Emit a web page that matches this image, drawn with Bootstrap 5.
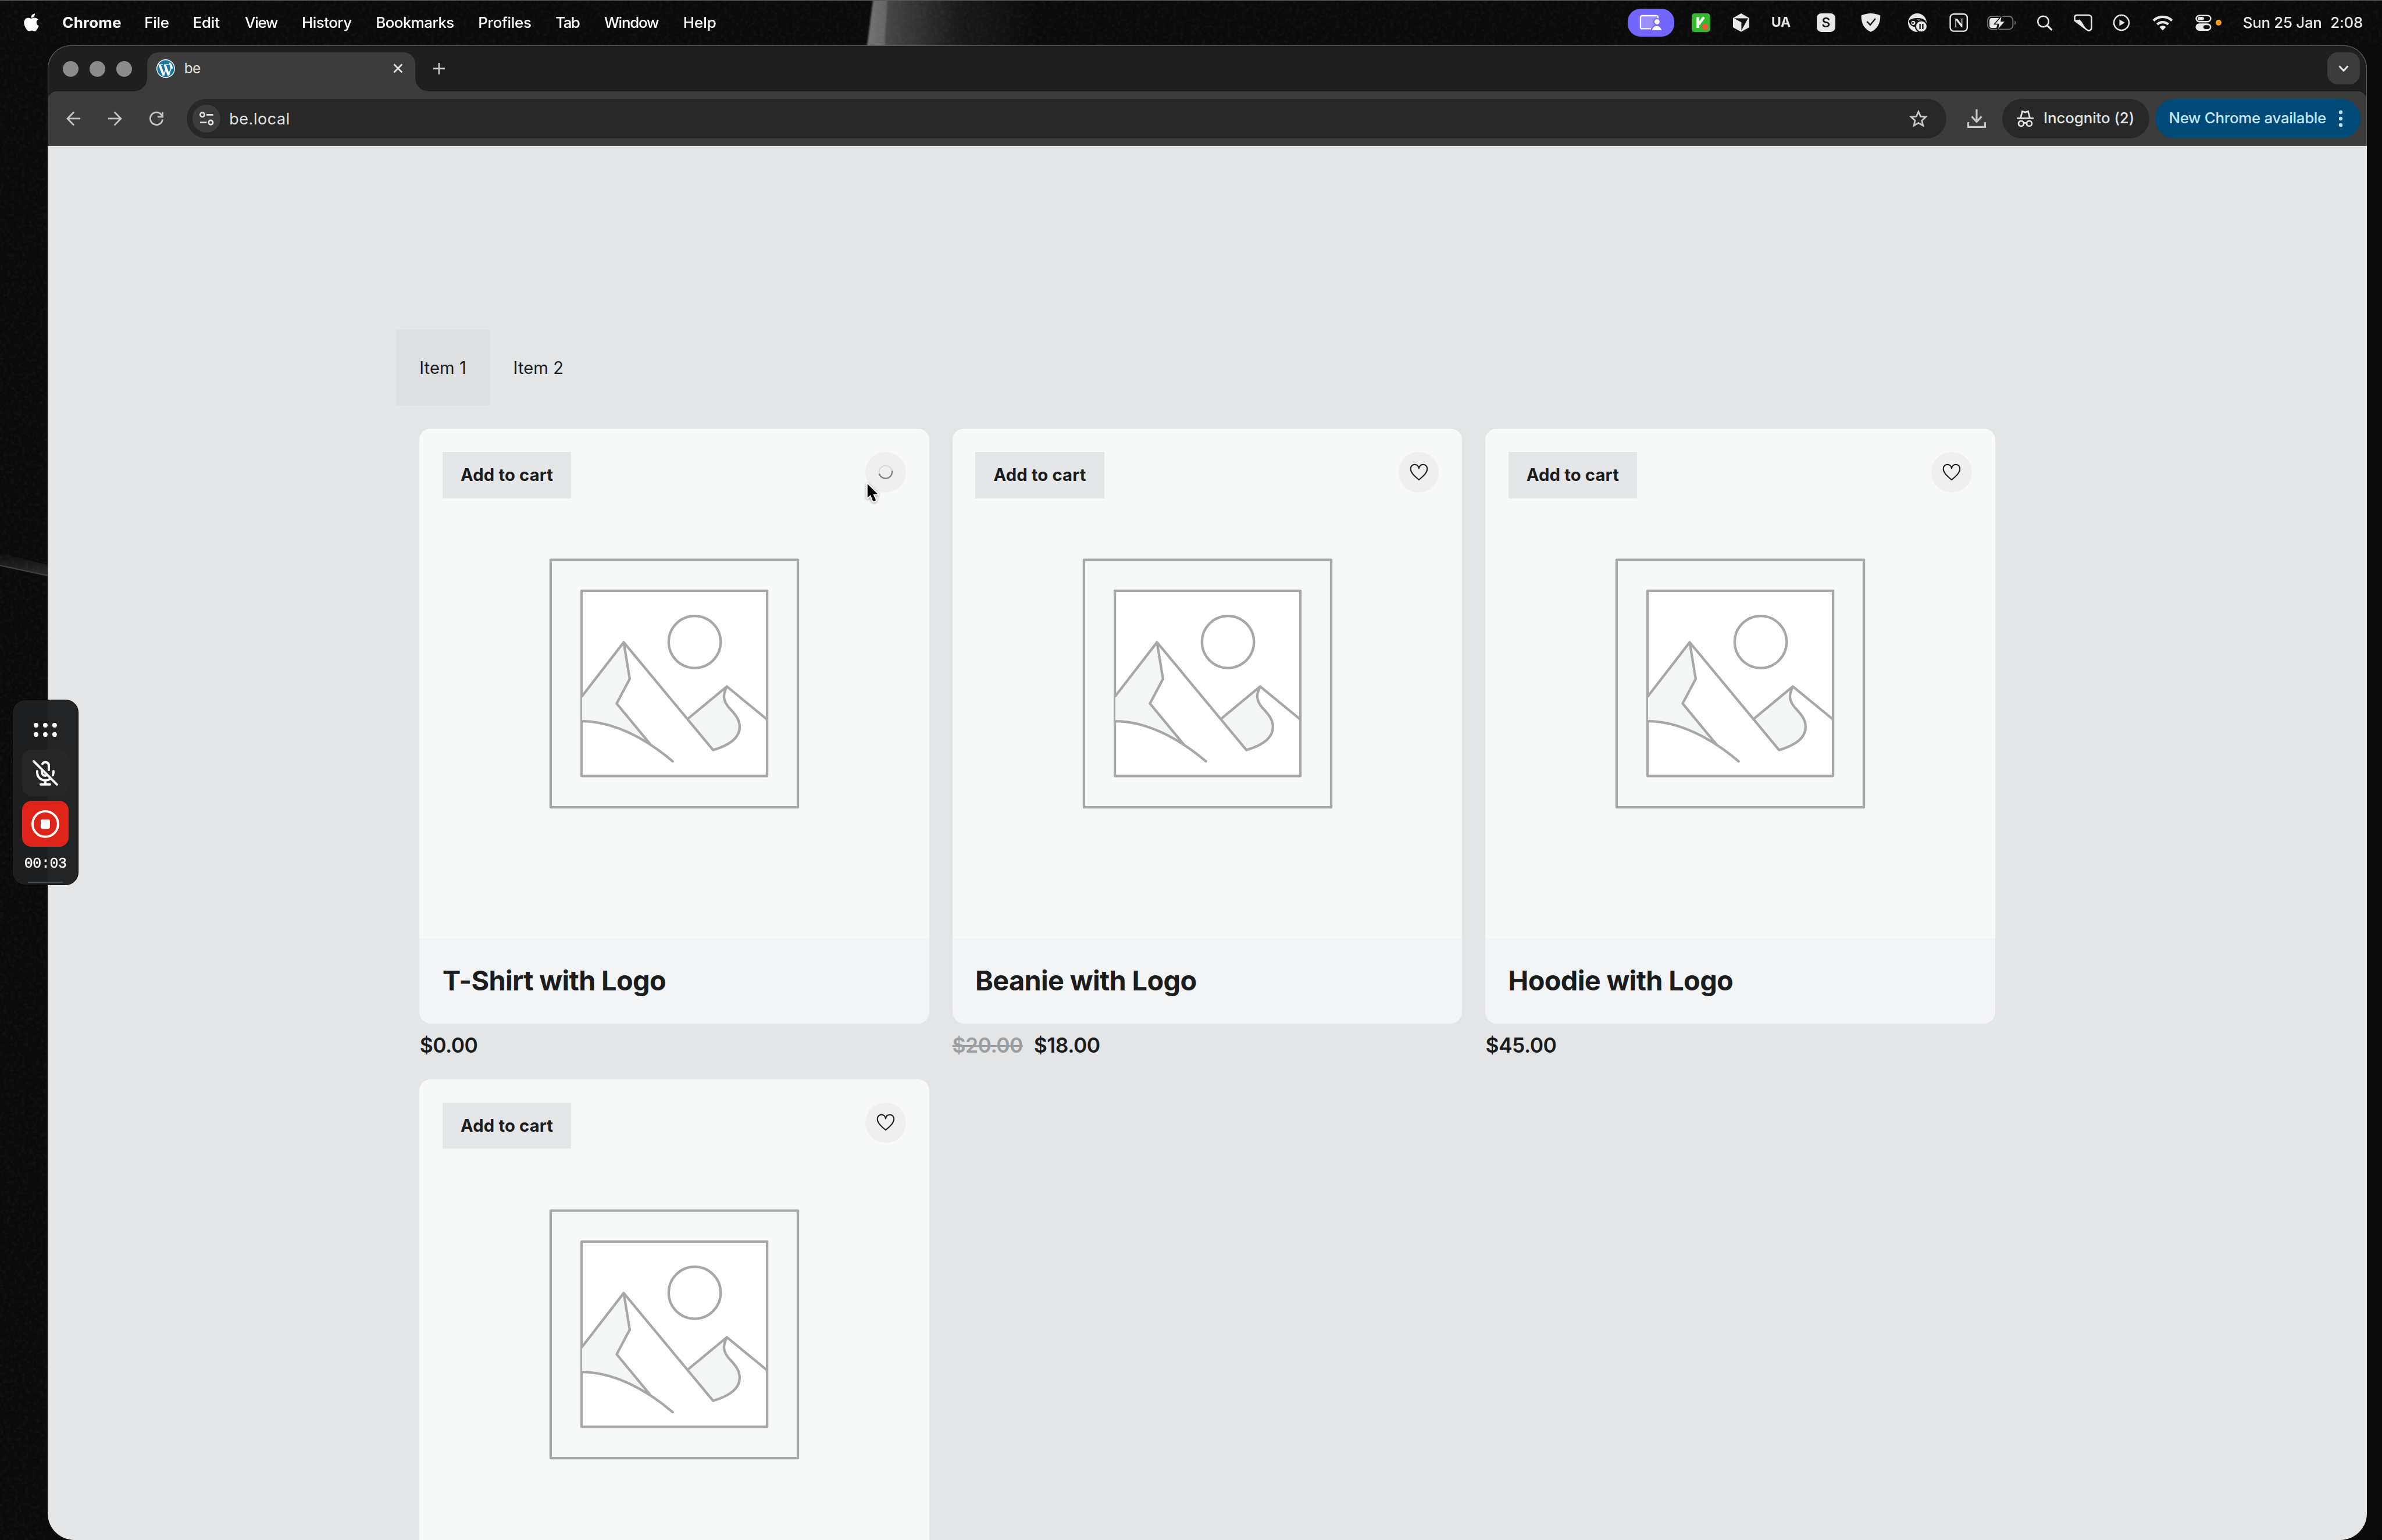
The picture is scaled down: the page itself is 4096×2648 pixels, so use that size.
<!DOCTYPE html>
<html lang="en">
<head>
<meta charset="utf-8">
<title>be</title>
<link rel="stylesheet" href="https://cdn.jsdelivr.net/npm/bootstrap@5.3.0/dist/css/bootstrap.min.css">
<style>
html,body{margin:0;background:#0b0b0b;overflow:hidden}
body{font-family:Inter,"Noto Sans",sans-serif;color:#1b1c1d;width:4096px;height:2648px}
svg{display:block;flex:none;overflow:visible}
.desk{zoom:.9961089;width:4112px;height:2658px;overflow:hidden;background:#0b0b0b}
.wallpaper{position:absolute;left:0;top:0}
.menubar{height:78px;padding:0 0 0 41px;font-size:26px;font-weight:500;line-height:32px;color:#fff;white-space:nowrap}
.apple{width:66.7px}
.apps span{flex:none}
.apps span:nth-child(1){width:141.5px;font-weight:700;letter-spacing:.25px}
.apps span:nth-child(2){width:83.8px;letter-spacing:-.27px}
.apps span:nth-child(3){width:89.8px;letter-spacing:-.2px}
.apps span:nth-child(4){width:98.2px;letter-spacing:-1.28px}
.apps span:nth-child(5){width:127.8px;letter-spacing:-.5px}
.apps span:nth-child(6){width:176.6px;letter-spacing:-.52px}
.apps span:nth-child(7){width:133.6px;letter-spacing:-.3px}
.apps span:nth-child(8){width:84px;letter-spacing:-1.57px}
.apps span:nth-child(9){width:136.4px;letter-spacing:-1.22px}
.tray{width:1302px;color:#e8e8e8}
.tray>:nth-child(2){margin-left:30px}
.tray>:nth-child(3){margin-left:39px}
.tray>:nth-child(5){margin-left:42px}
.tray>:nth-child(6){margin-left:45px}
.tray>:nth-child(7){margin-left:46px}
.tray>:nth-child(8){margin-left:38.5px}
.tray>:nth-child(9){margin-left:32px}
.tray>:nth-child(10){margin-left:34px}
.tray>:nth-child(11){margin-left:36px}
.tray>:nth-child(12){margin-left:35px}
.tray>:nth-child(13){margin-left:39px}
.tray>:nth-child(14){margin-left:38px}
.tray>:nth-child(15){margin-left:7px}
.share{width:80px;height:48px;border-radius:22px;background:#7266ff}
.ua{width:36px;margin:0 0 0 37px;font-size:23px;font-weight:700;letter-spacing:-.3px}
.date{width:151px;margin-left:37px;letter-spacing:-.29px}
.time{letter-spacing:-.23px}
.win{margin-left:82px;width:4004px;height:2580px;border-radius:40px 40px 46px 46px;overflow:hidden;background:#e4e5e7}
.chrome-top{height:174px;background:#1f1f1f}
.chrome-top::after{content:"";position:absolute;inset:0;border:1.5px solid #5c5c5c;border-top-width:2px;border-bottom:0;border-radius:40px 40px 0 0;pointer-events:none}
.strip{height:80px;padding:12px 12px 0 26.5px}
.lights{height:58px}
.light{width:27.5px;height:27.5px;border-radius:50%;background:#8c8c8c;margin-right:18.5px}
.btab{width:463px;height:68px;background:#3c3c3c;border-radius:20px 20px 0 0;margin-left:7.5px;padding:0 21.5px 12px 16px;position:relative;color:#e3e3e3;font-size:24.5px;line-height:30px;letter-spacing:-.6px}
.btab::before,.btab::after{content:"";position:absolute;bottom:0;width:22px;height:22px}
.btab::before{left:-22px;background:radial-gradient(circle at 0 0,transparent 21.5px,#3c3c3c 22px)}
.btab::after{right:-22px;background:radial-gradient(circle at 100% 0,transparent 21.5px,#3c3c3c 22px)}
.plus{margin:17px 0 0 30px}
.chev{width:56px;height:56px;border-radius:18px;background:#3c3c3c}
.toolbar{height:94px;background:#3c3c3c;border-radius:16px 16px 0 0;padding:0 11px 0 28.3px;border-bottom:2px solid #474747}
.nav-ico{margin-right:40px}
.dl{margin:0 28.3px 0 35.7px}
.omni{width:3038px;height:68px;border-radius:34px;background:#282828;color:#e3e3e3;font-size:27px;letter-spacing:.62px;padding:0 32px 0 10px;margin-left:-4px}
.site{width:48px;height:48px;border-radius:50%;background:#3c3c3c;margin-right:15.5px}
.pill{height:68px;border-radius:34px;font-size:26px;white-space:nowrap;font-weight:450}
.incog{width:254px;background:#282828;color:#e3e3e3;padding-left:24.5px;letter-spacing:-.1px}
.incog svg{margin-right:16px}
.update{width:354px;background:#004a77;color:#c2e7ff;padding-left:23px;letter-spacing:-.3px;margin-left:10.7px}
.update svg{margin-left:21.5px}
.shop{padding-top:317px}
.tabs-nav{margin-left:602px;height:131px;font-size:29.3px}
.tabs-nav a{color:#1b1c1d;padding:2px 0 0 40px;height:131px;width:162px;letter-spacing:.1px}
.tabs-nav a.active{background:#dedfe1}
.grid{width:2760px;margin:40px 0 0 622px;--bs-gutter-x:40px;--bs-gutter-y:0}
.product{border:0;border-radius:20px;overflow:hidden;background:#f3f4f6;height:1027px}
.thumb{height:880px;background:#f7f9f8}
.overlay{position:absolute;left:0;right:0;top:0;padding:40px}
.cart{width:222px;height:80px;padding:0;border:0;border-radius:0;background:#e5e6e8;font-size:29.3px;font-weight:700;letter-spacing:.15px;color:#1b1c1d}
.wish{width:70px;height:70px;border-radius:50%;background:#efefef}
.cursor{position:absolute;left:769px;top:90px;filter:drop-shadow(0 2px 2px #0006)}
.name{height:147px;padding-left:40px;font-size:47px;font-weight:700;letter-spacing:-.63px;line-height:56px;color:#1b1c1d}
.name.b{padding-left:39.5px}
.price{height:96px;padding-top:20.3px;font-size:35.5px;font-weight:600;line-height:36px;padding-left:.5px;letter-spacing:-.5px}
.price del{color:#9c9d9e;text-decoration-thickness:3px;margin-right:19px;margin-left:-.5px}
.recorder{position:absolute;left:21px;top:1208px;width:115px;height:320px;border-radius:22px;background:linear-gradient(90deg,#1d1e20 60.5px,#232426 60.5px);border:2px solid #050505;padding-top:39px;color:#fff}
.rbtn{width:80px;height:80px;border-radius:16px}
.mic{background:#262627;margin-top:22px}
.rec{background:#de2318;margin-top:8px}
.timer{font:25px/30px "Liberation Mono",monospace;letter-spacing:-.4px;-webkit-text-stroke:.4px #fff;margin-top:15px}
.grip{width:60px;height:2px;background:#48494a;margin-top:15px}
</style>
</head>
<body>
<svg width="0" height="0" class="position-absolute">
<defs>
<symbol id="ph" viewBox="0 0 880 880">
<g fill="none" stroke="#a6a8a8" stroke-width="4.3" stroke-linejoin="round" stroke-linecap="round">
<rect x="226.8" y="226.6" width="426.8" height="427"/>
<rect x="280.2" y="279.9" width="320.2" height="319.8" fill="#fff"/>
<circle cx="475.4" cy="368.3" r="44.9"/>
<path stroke="none" fill="#f4f6f5" d="M281 461.8L352.9 368.8 363.3 432 340.7 474.5 399.4 545.6C360 520 318 505 281 505z"/>
<path stroke="none" fill="#f4f6f5" d="M463.1 501.4L531 445.2C524 459 524 469 534 481C545 493 553 501 553 515C553 534 534 547 507.2 554.8z"/>
<path d="M281 461.8L352.9 368.8 507.2 554.8C534 547 553 534 553 515C553 501 545 493 534 481C524 469 524 459 531 445.2M352.9 368.8L363.3 432 340.7 474.5 399.4 545.6M281 505C334 505 390 534 437.4 574.3M463.1 501.4L531 445.2 599.5 501.4"/>
</g>
</symbol>
<symbol id="heart" viewBox="0 0 32 30"><path d="M16 28.2C7 20.500 1.700 15.500 1.700 9.300C1.700 4.800 4.800 1.700 8.800 1.700C12.500 1.700 15.300 4.200 16 8.600C16.700 4.200 19.500 1.700 23.200 1.700C27.200 1.700 30.300 4.800 30.300 9.300C30.300 15.500 25 20.500 16 28.200Z" fill="none" stroke="#1b1c1d" stroke-width="2" stroke-linejoin="round"/></symbol>
<linearGradient id="fade" x1="0" x2="1"><stop offset="0" stop-color="#484848"/><stop offset=".25" stop-color="#303030"/><stop offset=".5" stop-color="#191919"/><stop offset="1" stop-color="#0b0b0b"/></linearGradient>
<linearGradient id="ray" x1="0" x2="1"><stop offset="0" stop-color="#747474"/><stop offset="1" stop-color="#636363"/></linearGradient>
<linearGradient id="glow" x1="0" y1="0" x2="0" y2="1"><stop offset="0" stop-color="#0d0d0d"/><stop offset="1" stop-color="#2a2a2a"/></linearGradient>
</defs>
</svg>
<div class="desk position-relative">
  <svg class="wallpaper" width="4112" height="2658" viewBox="0 0 4112 2658">
    <filter id="grain" x="0" y="0" width="1" height="1"><feTurbulence type="fractalNoise" baseFrequency=".16" numOctaves="2" seed="4"/><feColorMatrix values="0 0 0 0 1  0 0 0 0 1  0 0 0 0 1  .5 0 0 0 -.2"/></filter>
    <filter id="soft" x="-.2" width="1.4"><feGaussianBlur stdDeviation="1.600 0"/></filter>
    <rect width="4112" height="2658" fill="#0b0b0b"/>
    <path d="M1528 0H1790V78H1524z" fill="url(#fade)"/>
    <path d="M1507 0H1532L1527 78H1497z" fill="url(#ray)" filter="url(#soft)"/>
    <path d="M0 955L82 975V993L0 975z" fill="url(#glow)"/>
    <path d="M0 976L82 993.500" stroke="#3d3d3d" stroke-width="2.500"/>
    <g opacity=".18"><rect width="4112" height="78" filter="url(#grain)"/><rect y="78" width="82" height="2580" filter="url(#grain)"/></g>
    <rect width="4112" height="1.300" fill="#585a59"/>
  </svg>

  <header class="menubar d-flex align-items-center position-relative">
    <div class="apple"><svg width="26" height="31" viewBox="0 0 26 31" fill="#fff"><path d="M19.200.2c.2 2-.6 3.900-1.800 5.300-1.300 1.400-3.100 2.200-4.900 2.100-.2-1.900.7-3.800 1.800-5C15.500 1.200 17.500.300 19.200.200zM24.900 10.500c-1.900 1.200-3.100 2.900-3.100 5.200 0 2.600 1.600 4.700 4.100 5.600-.7 2.200-1.800 4.300-3.200 6.200-1.200 1.700-2.400 3.200-4.300 3.200-1.800 0-2.500-1.100-4.700-1.100s-3 1.100-4.800 1.100c-1.900 0-3.200-1.600-4.400-3.300C1.500 23.200 0 18.700.300 15.600c.3-4.700 3.300-7.900 6.900-8 2 0 3.800 1.300 5.100 1.300s3.500-1.500 6-1.400c2.600.1 5 1.200 6.600 3z"/></svg></div>
    <nav class="apps d-flex"><span>Chrome</span><span>File</span><span>Edit</span><span>View</span><span>History</span><span>Bookmarks</span><span>Profiles</span><span>Tab</span><span>Window</span><span>Help</span></nav>
    <div class="tray d-flex align-items-center ms-auto">
      <div class="share d-flex align-items-center justify-content-center"><svg width="40" height="28" viewBox="0 0 40 28"><rect x="2.500" y="2.500" width="29" height="21" rx="3" fill="#998fff" /><path d="M20 24.500H4.500a2.500 2.500 0 0 1-2.500-2.500V4.500A2.500 2.500 0 0 1 4.500 2H29.500A2.500 2.500 0 0 1 32 4.500V7" fill="none" stroke="#fff" stroke-width="2.400"/><g fill="#fff" stroke="#7266ff" stroke-width="2"><path d="M21 28a9 9.500 0 0 1 18 0z"/><circle cx="30.500" cy="12.500" r="5.500"/></g></svg></div>
      <svg width="32" height="32" viewBox="0 0 32 32"><rect width="32" height="32" rx="5" fill="#35b92f"/><path d="M10.500 6.500V25M21 6.500L12 19" fill="none" stroke="#fff" stroke-width="4.500"/><circle cx="23" cy="23" r="5.500" fill="#f4573b"/></svg>
      <svg width="30" height="32" viewBox="0 0 30 32"><path d="M15 0L29 8V24L15 32 1 24V8z" fill="#e8e8e8"/><path d="M3 8.500H27L15.500 29.500V15.500z" fill="#111"/></svg>
      <div class="ua">UA</div>
      <svg width="32" height="32" viewBox="0 0 32 32"><rect width="32" height="32" rx="8" fill="#e8e8e8"/><text x="16" y="24" text-anchor="middle" font-family="Inter" font-weight="600" font-size="23" fill="#111">S</text></svg>
      <svg width="34" height="32" viewBox="0 0 34 32"><path d="M17 0C22 0 28 1.500 33.500 3.500C33.500 17 29 26.500 17 32C5 26.500.500 17 .500 3.500C6 1.500 12 0 17 0z" fill="#e8e8e8"/><path d="M10.500 14L16 20 25 9" fill="none" stroke="#111" stroke-width="2.400"/></svg>
      <svg width="34" height="32" viewBox="0 0 34 32"><circle cx="17" cy="16" r="16" fill="#e8e8e8"/><path d="M3 15C7 8 24 7 31 14" fill="none" stroke="#111" stroke-width="2.500"/><path d="M3 12C7 9 15 9 19 12L16 24C10 24 5 21 3 16z" fill="#111"/><circle cx="10" cy="16.500" r="3.500" fill="#e8e8e8"/><circle cx="9.500" cy="16.500" r="1.500" fill="#111"/><circle cx="24" cy="22.500" r="10" fill="#e8e8e8" stroke="#111" stroke-width="2"/><path d="M21.700 18V27M26.500 18V27" stroke="#111" stroke-width="2.300"/></svg>
      <svg width="32.500" height="32" viewBox="0 0 32 32"><rect x="1.300" y="1.300" width="29.400" height="29.400" rx="6" fill="none" stroke="#e8e8e8" stroke-width="2.400"/><text x="16" y="24" text-anchor="middle" font-family="Liberation Serif" font-weight="700" font-size="23" fill="#e8e8e8">N</text></svg>
      <svg width="52" height="28" viewBox="0 0 52 28"><rect x="1" y="3" width="43.500" height="22.500" rx="7" fill="none" stroke="#6e6e6e" stroke-width="2"/><path d="M47.500 10.500c3 1.500 3 6 0 7.500z" fill="#6e6e6e"/><path d="M8 6H21L12 16.500H18L16 23H8a4 4 0 0 1-4-4V10a4 4 0 0 1 4-4z" fill="#e8e8e8"/><path d="M26 1L12.500 16.500H20L18 27 31.500 11.500H24z" fill="#e8e8e8" stroke="#111" stroke-width="1.500"/></svg>
      <svg width="28" height="28" viewBox="0 0 28 28" fill="none" stroke="#e8e8e8" stroke-width="2.600" stroke-linecap="round"><circle cx="11.500" cy="12" r="9.300"/><path d="M18.500 19L25.500 26" stroke-width="3.200"/></svg>
      <svg width="32" height="30" viewBox="0 0 32 30"><path d="M5 2H26A4.500 4.500 0 0 1 30.500 6.500V24A4.500 4.500 0 0 1 23 27.500L3 12.500A4 4 0 0 1 1.500 9V5.500A3.500 3.500 0 0 1 5 2z" fill="none" stroke="#e8e8e8" stroke-width="2.600"/><path d="M1 11.500L10 9.500 14 14 17 19 23 28z" fill="#e8e8e8"/></svg>
      <svg width="30" height="30" viewBox="0 0 30 30"><circle cx="15" cy="15" r="13" fill="none" stroke="#e8e8e8" stroke-width="2.500"/><path d="M11.500 9.500V20.500L21 15z" fill="#e8e8e8"/></svg>
      <svg width="36" height="28" viewBox="0 0 36 28" fill="none" stroke="#e8e8e8" stroke-width="4.200"><path d="M2 10.500A22.500 22.500 0 0 1 34 10.500M8.500 17A13.500 13.500 0 0 1 27.500 17"/><path d="M18 27.500L12.500 21.500A7.500 7.500 0 0 1 23.500 21.500z" fill="#e8e8e8" stroke="none"/></svg>
      <svg width="28" height="28" viewBox="0 0 28 28"><rect x="1.500" y="1.700" width="25" height="10.600" rx="5.300" fill="none" stroke="#e8e8e8" stroke-width="2.400"/><rect x="4" y="4" width="11" height="6" rx="3" fill="#e8e8e8"/><rect x=".500" y="15.300" width="27" height="12.700" rx="6.300" fill="#e8e8e8"/><rect x="14" y="18.200" width="11" height="7" rx="3.500" fill="#111"/></svg>
      <svg width="10" height="10" viewBox="0 0 10 10"><circle cx="5" cy="5" r="5" fill="#ff9f1a"/></svg>
      <div class="date">Sun 25 Jan</div><div class="time">2:08</div>
    </div>
  </header>

  <main class="win position-relative">
    <div class="chrome-top position-relative">
      <div class="strip d-flex">
        <div class="lights d-flex align-items-center"><i class="light"></i><i class="light"></i><i class="light"></i></div>
        <div class="btab d-flex align-items-center">
          <svg width="32" height="32" viewBox="0 0 32 32" class="me-3"><circle cx="16" cy="16" r="16" fill="#fff"/><circle cx="16" cy="16" r="14.600" fill="#1878a0"/><g fill="none" stroke="#fff"><path d="M3 9.300H11M13 9.300H21" stroke-width="1.600"/><path d="M5.500 9.500L12.500 28M14.500 9.500L21 27.500" stroke-width="4"/><path d="M12.300 28L16.500 16M20.700 28L26.500 12" stroke-width="1.800"/><path d="M24.500 6.500c-2 2.500 2.500 5.500 1.500 9.500" stroke-width="4"/></g></svg>
          <span>be</span>
          <svg class="ms-auto" width="17" height="17" viewBox="0 0 17 17"><path d="M1.500 1.500L15.500 15.500M15.500 1.500L1.500 15.500" stroke="#e3e3e3" stroke-width="2.800"/></svg>
        </div>
        <svg class="plus" width="22" height="22" viewBox="0 0 22 22"><path d="M11 1V21M1 11H21" stroke="#c7c7c7" stroke-width="2.800"/></svg>
        <div class="chev ms-auto d-flex align-items-center justify-content-center"><svg width="18" height="12" viewBox="0 0 18 12"><path d="M1.500 1.500L9 9.500 16.500 1.500" fill="none" stroke="#e3e3e3" stroke-width="3"/></svg></div>
      </div>
      <div class="toolbar d-flex align-items-center">
        <svg class="nav-ico" width="32" height="32" viewBox="0 0 32 32" fill="none" stroke="#c7c7c7" stroke-width="2.800"><path d="M28 16H6M17.300 4.500L6 16 17.300 27.500"/></svg>
        <svg class="nav-ico" width="32" height="32" viewBox="0 0 32 32" fill="none" stroke="#c7c7c7" stroke-width="2.800"><path d="M4 16H26M14.700 4.500L26 16 14.700 27.500"/></svg>
        <svg class="nav-ico" width="32" height="32" viewBox="0 0 32 32" fill="none" stroke="#c7c7c7" stroke-width="2.800"><path d="M26.700 17.500A10.700 10.700 0 1 1 24.500 9.300L26.500 12"/><path d="M26.700 4.500V13H18"/></svg>
        <div class="omni d-flex align-items-center"><span class="site d-flex align-items-center justify-content-center"><svg width="26" height="24" viewBox="0 0 26 24" fill="none" stroke="#e3e3e3" stroke-width="2.700"><circle cx="6" cy="5.300" r="3.700"/><path d="M13 5.300H24.500M2 18.700H13.500"/><circle cx="20.500" cy="18.700" r="3.700"/></svg></span>be.local
          <svg class="ms-auto" width="32" height="30" viewBox="0 0 32 30"><path d="M16 3L19.700 11.300 28.600 12.200 21.900 18.200 23.800 27 16 22.400 8.200 27 10.100 18.200 3.400 12.200 12.300 11.300z" fill="none" stroke="#c7c7c7" stroke-width="2.800"/></svg></div>
        <svg class="dl" width="32" height="32" viewBox="0 0 32 32" fill="none" stroke="#c7c7c7" stroke-width="3.200"><path d="M16 0V21M7.500 12.500L16 21.500 24.500 12.500M1.500 22V30.500H30.500V22"/></svg>
        <div class="pill incog d-flex align-items-center"><svg width="31" height="30" viewBox="0 0 31 30" fill="none" stroke="#e3e3e3" stroke-width="2.800"><path d="M1 14.500H30M7.500 14L10.500 2.500 15.500 4 20.500 2.500 23.500 14"/><circle cx="8.500" cy="23.500" r="4.500"/><circle cx="22.500" cy="23.500" r="4.500"/><path d="M13 22.500H18"/></svg>Incognito (2)</div>
        <div class="pill update d-flex align-items-center">New Chrome available<svg width="8" height="32" viewBox="0 0 8 32" fill="#c2e7ff"><circle cx="4" cy="5" r="3.200"/><circle cx="4" cy="16" r="3.200"/><circle cx="4" cy="27" r="3.200"/></svg></div>
      </div>
    </div>

    <section class="shop">
      <nav class="tabs-nav nav"><a class="active d-flex align-items-center text-decoration-none">Item 1</a><a class="d-flex align-items-center text-decoration-none">Item 2</a></nav>
      <div class="grid row">
        <div class="col-4">
          <article class="product card"><div class="thumb"><svg width="880" height="880"><use href="#ph"/></svg></div><h2 class="name d-flex align-items-center m-0">T-Shirt with Logo</h2>
            <div class="overlay d-flex justify-content-between align-items-start"><button class="btn cart">Add to cart</button><span class="wish d-flex align-items-center justify-content-center"><svg width="26" height="26" viewBox="0 0 26 26" fill="none" stroke-width="2.200"><circle cx="13" cy="13" r="11.300" stroke="#dcdcdc"/><path d="M24 10.500A11.300 11.300 0 0 1 2 15.500" stroke="#7d7d7d"/></svg></span></div>
            <svg class="cursor" width="26" height="38" viewBox="0 0 26 38"><path d="M4.800 5.300V28.800L10 24.200 14 34.200 15.800 35.200 18.600 34 18.900 32.600 14.500 22.800H22.500z" fill="#000" stroke="#fff" stroke-width="4" stroke-linejoin="round" paint-order="stroke"/></svg>
          </article>
          <div class="price">$0.00</div>
        </div>
        <div class="col-4">
          <article class="product card"><div class="thumb"><svg width="880" height="880"><use href="#ph"/></svg></div><h2 class="name b d-flex align-items-center m-0">Beanie with Logo</h2>
            <div class="overlay d-flex justify-content-between align-items-start"><button class="btn cart">Add to cart</button><span class="wish d-flex align-items-center justify-content-center"><svg width="32" height="30"><use href="#heart"/></svg></span></div></article>
          <div class="price"><del>$20.00</del><span>$18.00</span></div>
        </div>
        <div class="col-4">
          <article class="product card"><div class="thumb"><svg width="880" height="880"><use href="#ph"/></svg></div><h2 class="name b d-flex align-items-center m-0">Hoodie with Logo</h2>
            <div class="overlay d-flex justify-content-between align-items-start"><button class="btn cart">Add to cart</button><span class="wish d-flex align-items-center justify-content-center"><svg width="32" height="30"><use href="#heart"/></svg></span></div></article>
          <div class="price">$45.00</div>
        </div>
        <div class="col-4">
          <article class="product card"><div class="thumb"><svg width="880" height="880"><use href="#ph"/></svg></div>
            <div class="overlay d-flex justify-content-between align-items-start"><button class="btn cart">Add to cart</button><span class="wish d-flex align-items-center justify-content-center"><svg width="32" height="30"><use href="#heart"/></svg></span></div></article>
        </div>
      </div>
    </section>
  </main>

  <aside class="recorder d-flex flex-column align-items-center">
    <svg width="40" height="24" viewBox="0 0 40 24" fill="#fff"><circle cx="4" cy="4" r="4"/><circle cx="20" cy="4" r="4"/><circle cx="36" cy="4" r="4"/><circle cx="4" cy="20" r="4"/><circle cx="20" cy="20" r="4"/><circle cx="36" cy="20" r="4"/></svg>
    <div class="rbtn mic d-flex align-items-center justify-content-center"><svg width="44" height="44" viewBox="0 0 44 44" fill="none" stroke="#fff" stroke-width="4" stroke-linecap="round"><path d="M2 2L42 42M17 6.500A6 6 0 0 1 28 8V17M16 17V21A6 6 0 0 0 23 26.800M8 19V21A14 14 0 0 0 30 32.500M36 19V21C36 23 35.700 24.500 35 26M22 35.500V42M14 42H30"/></svg></div>
    <div class="rbtn rec d-flex align-items-center justify-content-center"><svg width="48" height="48" viewBox="0 0 48 48"><circle cx="24" cy="24" r="22" fill="none" stroke="#fff" stroke-width="4"/><rect x="16" y="16" width="16" height="16" rx="3" fill="#fff"/></svg></div>
    <div class="timer">00:03</div>
    <div class="grip"></div>
  </aside>
</div>
<script src="https://cdn.jsdelivr.net/npm/bootstrap@5.3.0/dist/js/bootstrap.bundle.min.js"></script>
</body>
</html>
